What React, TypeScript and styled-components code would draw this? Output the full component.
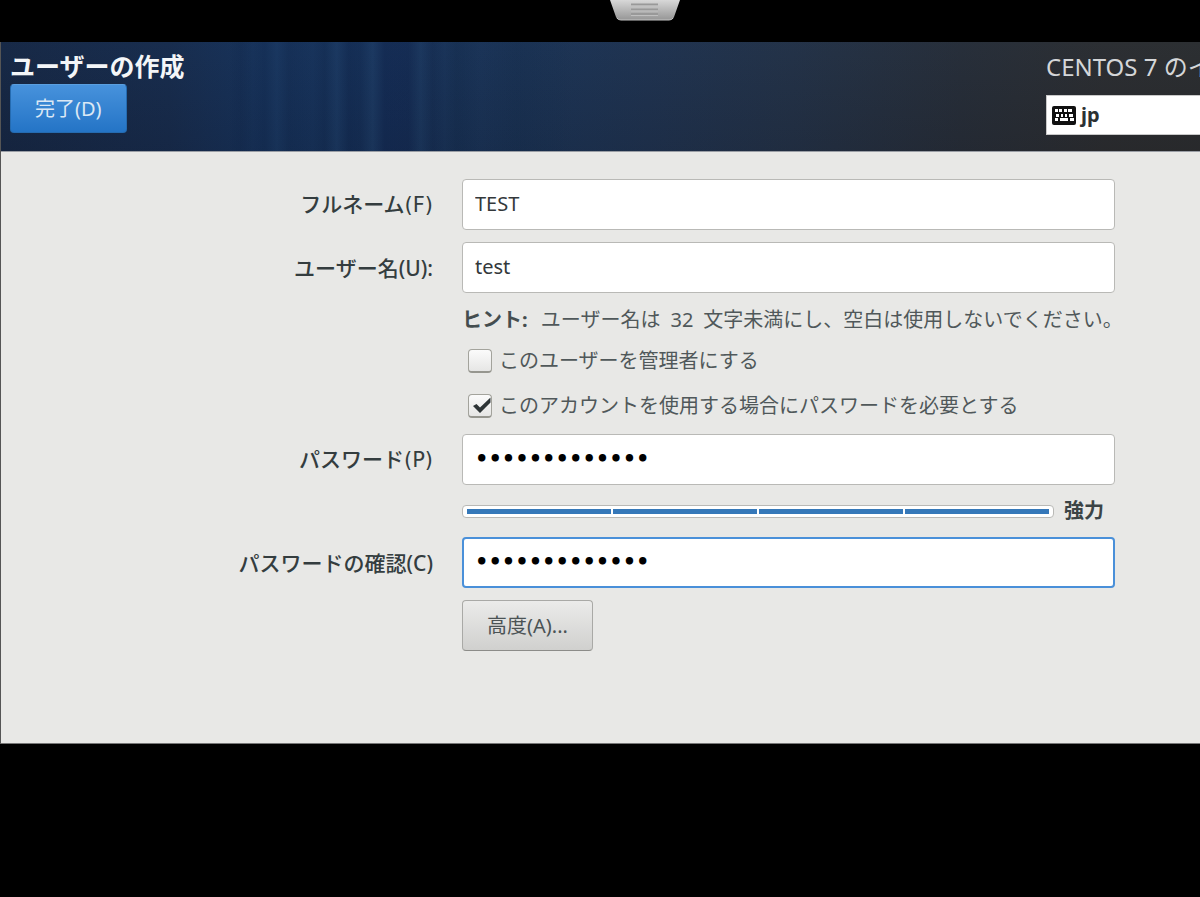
import React from "react";
import styled, { createGlobalStyle, css } from "styled-components";

const GlobalStyle = createGlobalStyle`
  *, *::before, *::after { box-sizing: border-box; }
  html, body { margin: 0; background: #000; }
  body, button, input {
    font-family: "Noto Sans", "Noto Sans CJK JP", sans-serif;
    font-size: 20px;
    line-height: 28px;
  }
`;

const Screen = styled.div`
  min-height: 100vh;
  background: #000;
  overflow: hidden;
`;

const ViewerBar = styled.div`
  display: flex;
  justify-content: center;
  align-items: flex-start;
  height: 42px;
  padding-left: 90px;
`;

const HandleButton = styled.button`
  display: block;
  padding: 0;
  border: 0;
  background: none;
  line-height: 0;
`;

const Window = styled.main`
  border-left: 1px solid #555;
  border-bottom: 1px solid #777;
  background: #e8e8e6;
`;

const Header = styled.header`
  display: flex;
  justify-content: space-between;
  height: 110px;
  padding: 10px 0 0 9px;
  border-bottom: 1px solid #9a9ea5;
  background:
    linear-gradient(90deg, transparent 19%, #0a1a3a22 20%, transparent 21%, #0a1a3a22 22%, #3a6a9a11 23%, #0a1a3a22 24%, transparent 26%, #06163622 27%, #3a6a9a18 28%, #06163a33 29%, #06163a22 30%, #4070a018 31%, #06103a33 32%, #06103a33 34%, #4070a011 35%, #06103022 36%, transparent 37%, #06183022 38%, transparent 40%, #06183018 43%, transparent 48%),
    linear-gradient(180deg, #1c4a7a11, #06102022),
    linear-gradient(90deg, #172743 0%, #182b4b 14%, #17325a 22%, #183259 32%, #1c3354 44%, #20324e 54%, #243145 66%, #282d36 80%, #2d2d2e 92%, #2d2d2d 100%);
`;

const HeaderMain = styled.div`
  display: flex;
  flex-direction: column;
  align-items: flex-start;
  gap: 4px;
`;

const Title = styled.h1`
  margin: 0;
  font-size: 25px;
  line-height: 28px;
  font-weight: 700;
  color: #f4f6f8;
`;

const Button = styled.button<{ $primary?: boolean }>`
  height: ${(p) => (p.$primary ? 49 : 51)}px;
  padding: 0 24px;
  border: 1px solid #a9a9a6;
  border-bottom-color: #8c8c89;
  border-radius: 4px;
  background: linear-gradient(#ebebea, #d0d0ce);
  color: #4b5355;
  ${(p) =>
    p.$primary &&
    css`
      border-color: #256bb0;
      border-top-color: #5a9fe0;
      background: linear-gradient(#4792dc, #2474c6);
      color: #dbe8f5;
    `}
`;

const HeaderSide = styled.div`
  display: flex;
  flex: none;
  flex-direction: column;
  gap: 13px;
  width: 154px;
  overflow: hidden;
`;

const Product = styled.div`
  font-size: 24px;
  line-height: 30px;
  color: #d4d6d8;
  white-space: nowrap;
`;

const LayoutButton = styled.button`
  display: flex;
  align-items: center;
  gap: 5px;
  height: 40px;
  padding: 0 5px;
  border: 1px solid #c9c9c9;
  border-right: 0;
  background: #fff;
  color: #2c3133;
  font-weight: 700;
`;

const Form = styled.form`
  display: grid;
  grid-template-columns: 432px minmax(0, 1fr);
  column-gap: 29px;
  row-gap: 12px;
  align-items: center;
  padding: 27px 85px 92px 0;
`;

const Label = styled.label<{ $wide?: boolean }>`
  justify-self: end;
  font-family: ${(p) => (p.$wide ? '"DejaVu Sans"' : '"Noto Sans"')}, "Noto Sans CJK JP", sans-serif;
  font-size: 21px;
  font-weight: 500;
  color: #343d3f;
`;

const Field = styled.input<{ $active?: boolean }>`
  grid-column: 2;
  width: 100%;
  height: 51px;
  padding: ${(p) => (p.$active ? "0 11px 2px" : "0 12px 2px")};
  border: ${(p) => (p.$active ? "2px solid #4a90d9" : "1px solid #b9b9b6")};
  border-radius: 4px;
  outline: 0;
  background: #fff;
  color: #33383a;

  &[type="password"] {
    font-family: "DejaVu Sans", sans-serif;
    font-size: 21px;
    font-weight: 700;
    color: #000;
  }
`;

const Hint = styled.p`
  grid-column: 2;
  margin: 0;
  line-height: 30px;
  color: #50585a;
  white-space: nowrap;

  strong {
    margin-right: 8px;
    color: #444d4f;
  }
`;

const Options = styled.div`
  grid-column: 2;
  display: flex;
  flex-direction: column;
  gap: 17px;
  padding: 0 0 2px 6px;
`;

const Option = styled.label`
  display: flex;
  align-items: center;
  gap: 7px;
  color: #50585a;
  white-space: nowrap;
`;

const TickFrame = styled.span`
  display: grid;
  flex: none;
  width: 24px;
  height: 24px;

  > * { grid-area: 1 / 1; }
  svg { pointer-events: none; visibility: hidden; }
  input:checked + svg { visibility: visible; }
`;

const Tick = styled.input`
  appearance: none;
  width: 24px;
  height: 24px;
  margin: 0;
  border: 1px solid #a3a39c;
  border-bottom: 2px solid #96968f;
  border-radius: 4px;
  background: linear-gradient(#fbfbfb, #e6e6e5);
`;

const Strength = styled.div`
  grid-column: 2;
  display: flex;
  align-items: center;
  gap: 10px;
`;

const Meter = styled.div`
  display: flex;
  flex: 1;
  gap: 2px;
  height: 13px;
  padding: 3px 4px;
  border: 1px solid #b9b9b6;
  border-radius: 4px;
  background: #fff;
`;

const Segment = styled.span`
  flex: 1;
  height: 5px;
  background: #3578b9;
`;

const StrengthText = styled.span`
  flex: none;
  width: 51px;
  font-weight: 700;
  color: #3c4446;
`;

const Actions = styled.div`
  grid-column: 2;
`;

const Handle = () => (
  <svg width="72" height="21" viewBox="0 0 72 21" aria-hidden="true">
    <defs>
      <linearGradient id="handle" x1="0" y1="0" x2="0" y2="1">
        <stop offset="0" stopColor="#d8d8d8" />
        <stop offset="1" stopColor="#969696" />
      </linearGradient>
    </defs>
    <path d="M1 0 H71 L65 17 Q64 20 60 20 H12 Q8 20 7 17 Z" fill="url(#handle)" />
    <path d="M8 18 Q9 20 12 20 H60 Q63 20 64 18" fill="none" stroke="#c4c4c4" />
    <path d="M22 4.5H49M22 9.5H49M22 14H49" stroke="#999" strokeWidth="2" />
    <path d="M22 6H49M22 11H49M22 15.5H49" stroke="#c0c0c0" strokeWidth="1" />
  </svg>
);

const KeyboardIcon = () => (
  <svg width="24" height="19" viewBox="0 0 24 19" aria-hidden="true">
    <rect width="24" height="19" rx="2" fill="#111" />
    <path
      fill="#fff"
      d="M3 3h3v3H3zM7 3h3v3H7zM12 3h3v3h-3zM16 3h4v3h-4zM4 8h3v3H4zM9 8h2v3H9zM13 8h2v3h-2zM17 8h4v3h-4zM3 12h3v3H3zM8 12h8v3H8zM18 12h4v3h-4z"
    />
  </svg>
);

const TickMark = () => (
  <svg width="24" height="24" viewBox="0 0 24 24" aria-hidden="true">
    <path d="M5 12 L8.5 10 L12 13.5 L22.5 3.5 V8.5 L12 19 Z" fill="#2d3436" />
  </svg>
);

interface CheckProps {
  text: string;
  checked?: boolean;
}

const Check = ({ text, checked }: CheckProps) => (
  <Option>
    <TickFrame>
      <Tick type="checkbox" defaultChecked={checked} />
      <TickMark />
    </TickFrame>
    {text}
  </Option>
);

export default function App() {
  return (
    <Screen lang="ja">
      <GlobalStyle />
      <ViewerBar>
        <HandleButton type="button" aria-label="ツールバー">
          <Handle />
        </HandleButton>
      </ViewerBar>
      <Window>
        <Header>
          <HeaderMain>
            <Title>ユーザーの作成</Title>
            <Button type="button" $primary>完了(D)</Button>
          </HeaderMain>
          <HeaderSide>
            <Product>CENTOS 7 のイ</Product>
            <LayoutButton type="button">
              <KeyboardIcon />
              jp
            </LayoutButton>
          </HeaderSide>
        </Header>
        <Form onSubmit={(e) => e.preventDefault()}>
          <Label htmlFor="fullname" $wide>フルネーム(F)</Label>
          <Field id="fullname" type="text" defaultValue="TEST" />
          <Label htmlFor="username">ユーザー名(U):</Label>
          <Field id="username" type="text" defaultValue="test" />
          <Hint>
            <strong>ヒント:</strong> ユーザー名は{"\u2002"}32{"\u2002"}文字未満にし、空白は使用しないでください。
          </Hint>
          <Options>
            <Check text="このユーザーを管理者にする" />
            <Check text="このアカウントを使用する場合にパスワードを必要とする" checked />
          </Options>
          <Label htmlFor="password" $wide>パスワード(P)</Label>
          <Field id="password" type="password" defaultValue="abcdefghijklm" />
          <Strength>
            <Meter role="meter" aria-label="強力" aria-valuemin={0} aria-valuemax={4} aria-valuenow={4}>
              {[1, 2, 3, 4].map((n) => (
                <Segment key={n} />
              ))}
            </Meter>
            <StrengthText>強力</StrengthText>
          </Strength>
          <Label htmlFor="confirm">パスワードの確認(C)</Label>
          <Field id="confirm" type="password" defaultValue="abcdefghijklm" $active />
          <Actions>
            <Button type="button">高度(A)...</Button>
          </Actions>
        </Form>
      </Window>
    </Screen>
  );
}
